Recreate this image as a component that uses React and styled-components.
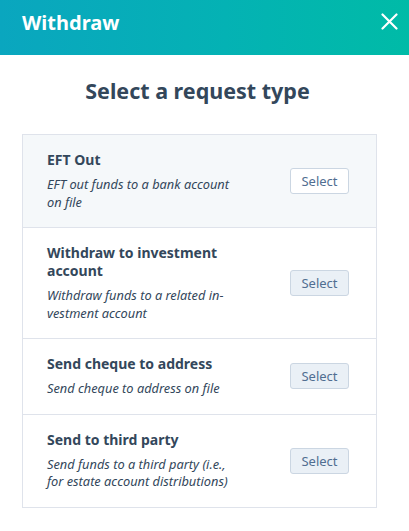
import React from 'react';
import styled, { createGlobalStyle } from 'styled-components';

const options = [
  { id: 'eft', title: ['EFT Out'], desc: ['EFT out funds to a bank account', 'on file'], active: true },
  { id: 'inv', title: ['Withdraw to investment', 'account'], desc: ['Withdraw funds to a related in-', 'vestment account'] },
  { id: 'chq', title: ['Send cheque to address'], desc: ['Send cheque to address on file'] },
  { id: 'tp', title: ['Send to third party'], desc: ['Send funds to a third party (i.e.,', 'for estate account distributions)'] },
];

const Lines = ({ lines }) =>
  lines.map((l, i) => (
    <React.Fragment key={i}>
      {l}
      {i < lines.length - 1 && <br />}
    </React.Fragment>
  ));

export default function App() {
  return (
    <>
      <Global />
      <StyPanel>
        <StyHeader>
          <StyHeaderTitle>Withdraw</StyHeaderTitle>
          <StyClose aria-label="Close">
            <svg width="17" height="17" viewBox="0 0 17 17">
              <path d="M1.5 1.5 L15.5 15.5 M15.5 1.5 L1.5 15.5" stroke="#fff" strokeWidth="2.2" strokeLinecap="round" />
            </svg>
          </StyClose>
        </StyHeader>
        <StyBody>
          <StyHeading>Select a request type</StyHeading>
          <StyList>
            {options.map((o) => (
              <StyRow key={o.id} $active={o.active}>
                <StyText>
                  <StyTitle><Lines lines={o.title} /></StyTitle>
                  <StyDesc><Lines lines={o.desc} /></StyDesc>
                </StyText>
                <StyButton $active={o.active}>Select</StyButton>
              </StyRow>
            ))}
          </StyList>
        </StyBody>
      </StyPanel>
    </>
  );
}

// Styled Components

const Global = createGlobalStyle`
  body {
    margin: 0;
    background: #fff;
    font-family: "Noto Sans", "Liberation Sans", sans-serif;
    color: #33475b;
  }
`;

const StyPanel = styled.div`
  width: 409px;
  height: 531px;
  overflow: hidden;
  background: #fff;
`;

const StyHeader = styled.header`
  height: 55px;
  padding: 0 11px 0 22px;
  display: flex;
  align-items: center;
  justify-content: space-between;
  background: linear-gradient(90deg, #0aa6bf 0%, #04b2b4 55%, #00bba7 100%);
  box-sizing: border-box;
`;

const StyHeaderTitle = styled.h1`
  margin: 0 0 11px;
  font-size: 20px;
  font-weight: 700;
  color: #fff;
`;

const StyClose = styled.button`
  border: 0;
  background: none;
  padding: 0;
  width: 17px;
  height: 17px;
  margin: 0 0 13px 0;
  display: flex;
  cursor: pointer;
`;

const StyBody = styled.main`
  padding: 0 32px 0 22px;
`;

const StyHeading = styled.h2`
  margin: 21px 0 0;
  height: 58px;
  line-height: 30px;
  text-align: center;
  font-size: 21.5px;
  font-weight: 700;
  color: #33475b;
  padding-right: 4px;
`;

const StyList = styled.section`
  border: 1px solid #dfe3eb;
  width: 355px;
  box-sizing: border-box;
`;

const StyRow = styled.div`
  display: flex;
  align-items: center;
  justify-content: space-between;
  padding: 16px 27px 16px 24px;
  background: ${(p) => (p.$active ? '#f5f8fa' : '#fff')};
  & + & {
    border-top: 1px solid #dfe3eb;
  }
`;

const StyText = styled.div`
  display: flex;
  flex-direction: column;
  gap: 7px;
`;

const StyTitle = styled.div`
  font-size: 14px;
  line-height: 18px;
  font-weight: 700;
  color: #33475b;
`;

const StyDesc = styled.div`
  font-size: 12.8px;
  line-height: 17.5px;
  font-style: italic;
  color: #33475b;
`;

const StyButton = styled.button`
  flex: none;
  width: 59px;
  height: 26px;
  border-radius: 3px;
  border: 1px solid #cbd6e2;
  background: ${(p) => (p.$active ? '#fff' : '#eaf0f6')};
  color: #506e91;
  font-family: inherit;
  font-size: 13px;
  padding: 0;
  cursor: pointer;
`;
